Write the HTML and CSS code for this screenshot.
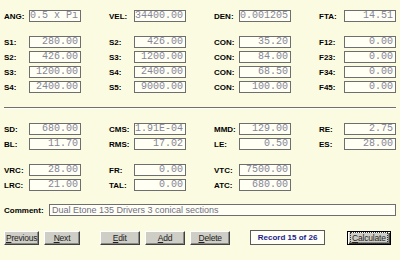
FILE: index.html
```html
<!DOCTYPE html>
<html lang="en">
<head>
  <meta charset="UTF-8">
  <title>Horn Record</title>
  <link rel="stylesheet" href="styles.css">
</head>
<body>
  <div class="form">
    <div class="group">
      <div class="field"><label>ANG:</label><div class="box">0.5 x Pi</div></div>
      <div class="field"><label>VEL:</label><div class="box">34400.00</div></div>
      <div class="field"><label>DEN:</label><div class="box">0.001205</div></div>
      <div class="field"><label>FTA:</label><div class="box">14.51</div></div>
    </div>

    <div class="group">
      <div class="field"><label>S1:</label><div class="box">280.00</div></div>
      <div class="field"><label>S2:</label><div class="box">426.00</div></div>
      <div class="field"><label>CON:</label><div class="box">35.20</div></div>
      <div class="field"><label>F12:</label><div class="box">0.00</div></div>

      <div class="field"><label>S2:</label><div class="box">426.00</div></div>
      <div class="field"><label>S3:</label><div class="box">1200.00</div></div>
      <div class="field"><label>CON:</label><div class="box">84.00</div></div>
      <div class="field"><label>F23:</label><div class="box">0.00</div></div>

      <div class="field"><label>S3:</label><div class="box">1200.00</div></div>
      <div class="field"><label>S4:</label><div class="box">2400.00</div></div>
      <div class="field"><label>CON:</label><div class="box">68.50</div></div>
      <div class="field"><label>F34:</label><div class="box">0.00</div></div>

      <div class="field"><label>S4:</label><div class="box">2400.00</div></div>
      <div class="field"><label>S5:</label><div class="box">9000.00</div></div>
      <div class="field"><label>CON:</label><div class="box">100.00</div></div>
      <div class="field"><label>F45:</label><div class="box">0.00</div></div>
    </div>

    <div class="sep"></div>

    <div class="group">
      <div class="field"><label>SD:</label><div class="box">680.00</div></div>
      <div class="field"><label>CMS:</label><div class="box">1.91E-04</div></div>
      <div class="field"><label>MMD:</label><div class="box">129.00</div></div>
      <div class="field"><label>RE:</label><div class="box">2.75</div></div>

      <div class="field"><label>BL:</label><div class="box">11.70</div></div>
      <div class="field"><label>RMS:</label><div class="box">17.02</div></div>
      <div class="field"><label>LE:</label><div class="box">0.50</div></div>
      <div class="field"><label>ES:</label><div class="box">28.00</div></div>
    </div>

    <div class="group">
      <div class="field"><label>VRC:</label><div class="box">28.00</div></div>
      <div class="field"><label>FR:</label><div class="box">0.00</div></div>
      <div class="field"><label>VTC:</label><div class="box">7500.00</div></div>
      <div class="field"></div>

      <div class="field"><label>LRC:</label><div class="box">21.00</div></div>
      <div class="field"><label>TAL:</label><div class="box">0.00</div></div>
      <div class="field"><label>ATC:</label><div class="box">680.00</div></div>
      <div class="field"></div>
    </div>

    <div class="comment-row">
      <label>Comment:</label>
      <div class="comment-box">Dual Etone 135 Drivers 3 conical sections</div>
    </div>

    <div class="buttons">
      <button class="btn btn-nav"><u>P</u>revious</button>
      <button class="btn btn-nav"><u>N</u>ext</button>
      <button class="btn btn-edit gap-left"><u>E</u>dit</button>
      <button class="btn btn-edit"><u>A</u>dd</button>
      <button class="btn btn-edit"><u>D</u>elete</button>
      <div class="record">Record 15 of 26</div>
      <button class="btn btn-calc"><span><u>C</u>alculate</span></button>
    </div>
  </div>
</body>
</html>
```

FILE: styles.css
```css
body {
  margin: 0;
  padding: 0;
  background-color: #fbfbe1;
  font-family: 'Liberation Sans', Arial, sans-serif;
  overflow: hidden;
}

.form {
  width: 400px;
  height: 260px;
  padding: 10px 4px 0 4px;
  box-sizing: border-box;
}

.group {
  display: grid;
  grid-template-columns: 105px 105px 105px 77px;
  row-gap: 3px;
  margin-bottom: 14px;
}

.field {
  display: flex;
  align-items: center;
  height: 12px;
}

.field label {
  width: 25px;
  font-size: 8px;
  font-weight: bold;
  color: #000;
}

.box {
  width: 52px;
  height: 12px;
  box-sizing: border-box;
  border: 1px solid #6e6e6e;
  background-color: #fffff4;
  font-family: 'Liberation Mono', 'Courier New', monospace;
  font-size: 10px;
  line-height: 10px;
  color: #86869a;
  text-align: right;
  padding-right: 2px;
  white-space: nowrap;
  overflow: hidden;
}

.sep {
  height: 1px;
  background-color: #707070;
  border-bottom: 1px solid #fff;
  width: 392px;
  margin-bottom: 14px;
}

.comment-row {
  display: flex;
  align-items: center;
  height: 12px;
  margin-top: -1px;
}

.comment-row label {
  width: 45px;
  font-size: 8px;
  font-weight: bold;
  color: #000;
}

.comment-box {
  width: 347px;
  height: 12px;
  box-sizing: border-box;
  border: 1px solid #6e6e6e;
  background-color: #fffff4;
  font-size: 9px;
  line-height: 10px;
  color: #707088;
  padding-left: 2px;
  white-space: nowrap;
}

.buttons {
  display: flex;
  align-items: center;
  margin-top: 14px;
  height: 15px;
}

.btn {
  height: 14px;
  padding: 0;
  margin: 0 5px 0 0;
  box-sizing: border-box;
  background-color: #cfcec6;
  border: 1px solid;
  border-color: #fff #404040 #404040 #fff;
  box-shadow: inset -1px -1px #8a8a84;
  font-family: 'Liberation Sans', Arial, sans-serif;
  font-size: 8.5px;
  letter-spacing: -0.2px;
  line-height: 10px;
  color: #222;
  cursor: pointer;
}

.btn-nav {
  width: 36px;
}

.btn-edit {
  width: 41px;
}

.gap-left {
  margin-left: 15px;
}

.record {
  width: 76px;
  height: 15px;
  margin-left: 15px;
  box-sizing: border-box;
  border: 1px solid #5a5a5a;
  background-color: #fffff6;
  color: #1c1c8c;
  font-size: 8px;
  font-weight: bold;
  line-height: 13px;
  text-align: center;
}

.btn-calc {
  width: 45px;
  margin-left: 22px;
  border: 1px solid #000;
  box-shadow: inset 1px 1px #fff, inset -1px -1px #404040, inset -2px -2px #8a8a84;
}

.btn-calc span {
  border: 1px dotted #333;
  padding: 0 1px;
}
```
